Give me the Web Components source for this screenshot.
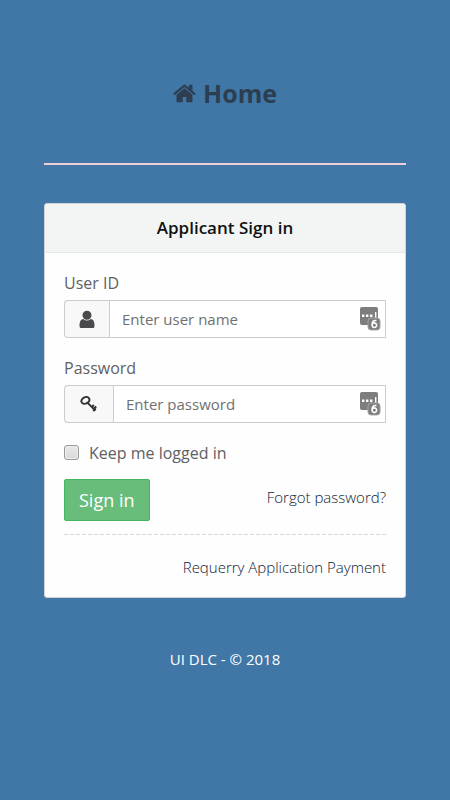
<!DOCTYPE html>
<html lang="en">
<head>
<meta charset="utf-8">
<meta name="viewport" content="width=device-width, initial-scale=1">
<title>Applicant Sign in</title>
<style>
  body {
    margin: 0;
    min-height: 100vh;
    background: #4077a7;
    color: #606163;
    font: 16px/24px "Open Sans", sans-serif;
  }
</style>
</head>
<body>
<login-page></login-page>

<script>
'use strict';

(function () {

  const ICONS = {
    home: {
      box: '64 0 1664 1792',
      shape: '<path fill="currentColor" d="M1472 992v480q0 26-19 45t-45 19h-384v-384h-256v384h-384q-26 0-45-19t-19-45v-480q0-1 .5-3t.5-3l575-474 575 474q1 2 1 6zm223-69l-62 74q-8 9-21 11h-3q-13 0-21-7l-692-577-692 577q-12 8-24 7-13-2-21-11l-62-74q-8-10-7-23.5t11-21.5l719-599q32-26 76-26t76 26l244 204v-195q0-14 9-23t23-9h192q14 0 23 9t9 23v408l219 182q10 8 11 21.5t-7 23.5z"/>'
    },
    user: {
      box: '128 64 1536 1536',
      shape: '<path fill="currentColor" d="M1536 1399q0 109-62.5 187t-150.5 78h-854q-88 0-150.5-78t-62.5-187q0-85 8.5-160.5t31.5-152 58.5-131 94-89 134.5-34.5q131 128 313 128t313-128q76 0 134.5 34.5t94 89 58.5 131 31.5 152 8.5 160.5zm-256-887q0 159-112.5 271.5t-271.5 112.5-271.5-112.5-112.5-271.5 112.5-271.5 271.5-112.5 271.5 112.5 112.5 271.5z"/>'
    },
    key: {
      box: '0 0 18 18',
      shape: `<g fill="none" stroke="currentColor" stroke-width="2">
        <ellipse cx="5.4" cy="5.4" rx="4.2" ry="3.2" transform="rotate(-28 5.4 5.4)"/>
        <path d="M7.4 7.6l8 8M13.2 16l2.6-2.6M11.8 12l2-2M14 13.6l2.2-2" stroke-width="2"/>
      </g>`
    },
    manager: {
      box: '0 0 21 24',
      shape: `<rect x="0" y="0" width="18" height="18" rx="2" fill="#7d7d7d"/>
        <path d="M2 7.6h2.4V10H2zM6 7.6h2.4V10H6zM10 7.6h2.4V10H10zM15 5h1.4v6H15z" fill="#fff"/>
        <rect x="8" y="11" width="12" height="12" rx="3" fill="#7d7d7d" stroke="#a5a5a5" stroke-width="1"/>
        <path d="M16.4 13.6q-4.5-.6-4.3 4.4M14.3 15.9a2.3 2.3 0 1 0 .1 0z" fill="none" stroke="#fff" stroke-width="1.6"/>`
    }
  };

  class AppIcon extends HTMLElement {
    constructor() {
      super();
      this.attachShadow({ mode: 'open' });
    }

    connectedCallback() {
      const icon = ICONS[this.getAttribute('name')];

      this.shadowRoot.innerHTML = `
        <style>
          :host { display: inline-flex; width: 18px; height: 18px; }
          svg { width: 100%; height: 100%; }
        </style>
        <svg viewBox="${icon.box}" aria-hidden="true">${icon.shape}</svg>
      `;
    }
  }

  class IconField extends HTMLElement {
    constructor() {
      super();
      this.attachShadow({ mode: 'open' });
    }

    connectedCallback() {
      const name = this.getAttribute('name');

      this.shadowRoot.innerHTML = `
        <style>
          :host { display: block; }
          label { display: block; margin-bottom: 5px; }
          .group { display: flex; height: 38px; position: relative; }
          .addon {
            display: flex;
            align-items: center;
            padding: 0 13px;
            border: 1px solid #ccc;
            border-right: 0;
            border-radius: 4px 0 0 4px;
            background: #f8f8f8;
            color: #4a4a4c;
          }
          .addon.key { padding: 0 15px; color: #333; }
          input {
            flex: 1;
            min-width: 0;
            box-sizing: border-box;
            padding: 0 40px 0 12px;
            border: 1px solid #ccc;
            border-radius: 0;
            background: #fff;
            color: inherit;
            font: 15px/20px "Open Sans", sans-serif;
          }
          input::placeholder { color: #707070; opacity: 1; }
          .manager {
            position: absolute;
            right: 5px;
            top: 7px;
            width: 21px;
            height: 24px;
          }
        </style>
        <label for="${name}">${this.getAttribute('label')}</label>
        <div class="group">
          <span class="addon ${this.getAttribute('icon')}"><app-icon name="${this.getAttribute('icon')}"></app-icon></span>
          <input id="${name}" name="${name}" type="${this.getAttribute('type')}" placeholder="${this.getAttribute('placeholder')}">
          <app-icon class="manager" name="manager"></app-icon>
        </div>
      `;
    }
  }

  class PanelCard extends HTMLElement {
    constructor() {
      super();

      this.attachShadow({ mode: 'open' }).innerHTML = `
        <style>
          :host {
            display: block;
            border: 1px solid #d0d4d8;
            border-radius: 3px;
            background: #fefefe;
          }
          header {
            padding: 12px 20px;
            border-bottom: 1px solid #e4e7e7;
            border-radius: 2px 2px 0 0;
            background: #f3f5f5;
            color: #111;
            font-size: 17px;
            font-weight: 600;
            text-align: center;
          }
          .body { padding: 18px 19px; }
        </style>
        <header><slot name="title"></slot></header>
        <div class="body"><slot></slot></div>
      `;
    }
  }

  class SignInForm extends HTMLElement {
    constructor() {
      super();

      this.attachShadow({ mode: 'open' }).innerHTML = `
        <style>
          :host { display: block; }
          icon-field { margin-bottom: 18px; }
          .remember { display: flex; align-items: center; gap: 10px; }
          .remember input {
            appearance: none;
            box-sizing: border-box;
            width: 15px;
            height: 15px;
            margin: 0;
            border: 1px solid #999;
            border-radius: 3px;
            background: linear-gradient(#e8e8e8, #d8dada);
            box-shadow: inset 0 0 0 1px #eee;
          }
          .remember input:checked { background: #68bd7b; }
          .actions {
            display: flex;
            align-items: center;
            justify-content: space-between;
            margin-top: 14px;
          }
          button {
            padding: 8px 14px;
            border: 1px solid #44b65f;
            border-radius: 2px;
            background: #68bd7b;
            color: #fff;
            font: 18px/24px "Open Sans", sans-serif;
          }
          a { color: #0c1a33; font-size: 15px; font-weight: 350; text-decoration: none; }
          .actions a { padding-bottom: 6px; }
          hr {
            height: 1px;
            margin: 13px 0 20px;
            border: 0;
            background: repeating-linear-gradient(90deg, #d8d8d8 0 4px, transparent 4px 6px);
          }
          .more { text-align: right; }
        </style>
        <form>
          <icon-field label="User ID" icon="user" name="username" type="text" placeholder="Enter user name"></icon-field>
          <icon-field label="Password" icon="key" name="password" type="password" placeholder="Enter password"></icon-field>
          <div class="remember">
            <input type="checkbox" id="remember" name="remember">
            <label for="remember">Keep me logged in</label>
          </div>
          <div class="actions">
            <button type="submit">Sign in</button>
            <a href="#">Forgot password?</a>
          </div>
          <hr>
          <div class="more"><a href="#">Requerry Application Payment</a></div>
        </form>
      `;
    }
  }

  class LoginPage extends HTMLElement {
    constructor() {
      super();

      this.attachShadow({ mode: 'open' }).innerHTML = `
        <style>
          :host { display: block; max-width: 480px; margin: 0 auto; padding: 76px 44px; }
          .brand { text-align: center; }
          .brand a {
            display: inline-flex;
            align-items: center;
            gap: 7px;
            color: #2c3e50;
            font: 700 25px/34px "Open Sans", sans-serif;
            text-decoration: none;
          }
          .brand app-icon { width: 23px; height: 25px; }
          hr { margin: 51px 0 38px; border: 0; border-top: 2px solid #eccfd8; }
          footer { margin-top: 49px; color: #fff; font-size: 15px; text-align: center; }
        </style>
        <div class="brand"><a href="#"><app-icon name="home"></app-icon>Home</a></div>
        <hr>
        <panel-card>
          <span slot="title">Applicant Sign in</span>
          <sign-in-form></sign-in-form>
        </panel-card>
        <footer>UI DLC - © 2018</footer>
      `;
    }
  }

  customElements.define('app-icon', AppIcon);
  customElements.define('icon-field', IconField);
  customElements.define('panel-card', PanelCard);
  customElements.define('sign-in-form', SignInForm);
  customElements.define('login-page', LoginPage);
})();
</script>
</body>
</html>
